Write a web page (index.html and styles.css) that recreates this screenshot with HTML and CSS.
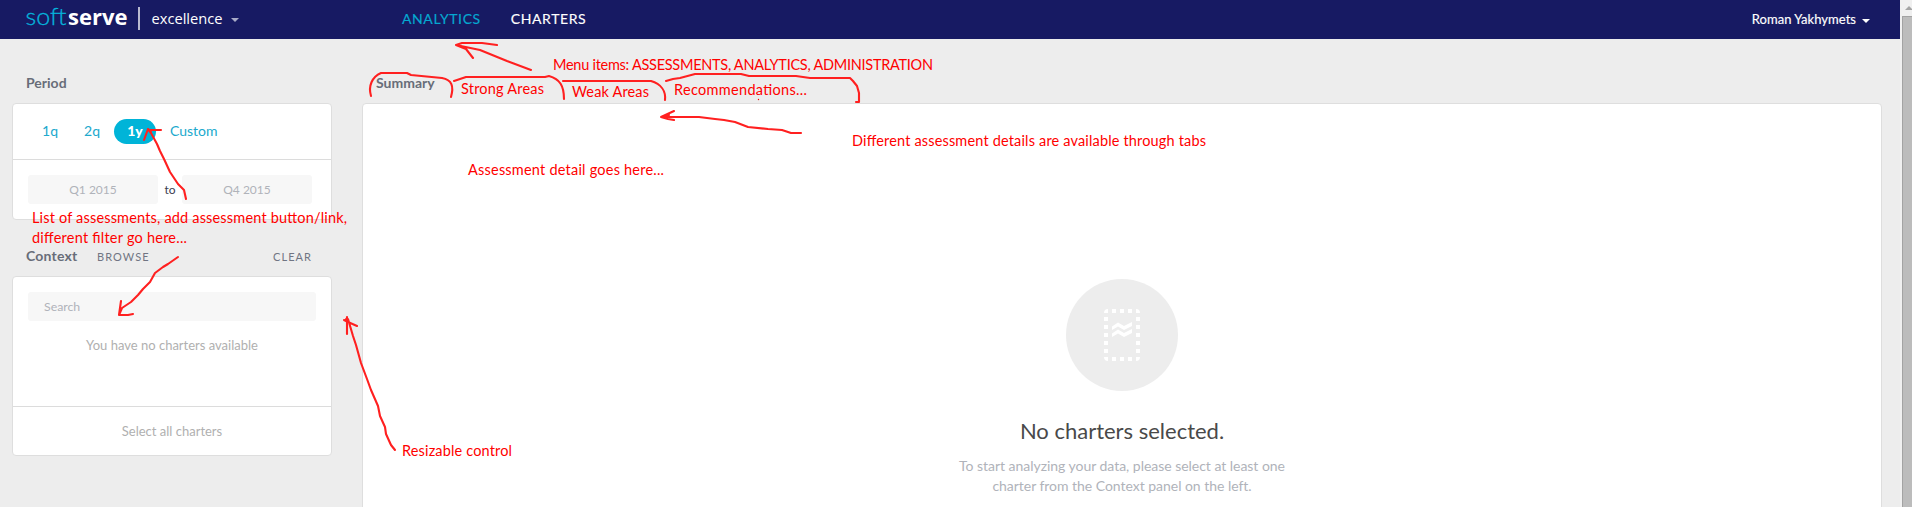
FILE: index.html
```html
<!DOCTYPE html>
<html lang="en">
<head>
<meta charset="utf-8">
<title>SoftServe Excellence – Analytics</title>
<link rel="stylesheet" href="styles.css">
</head>
<body>
<div class="page">
  <div class="app">
    <header class="topbar">
      <div class="brand">
        <svg class="logo" width="205" height="39" viewBox="26 0 205 39">
          <text class="logo-soft" x="25.5" y="25" textLength="41" lengthAdjust="spacingAndGlyphs">soft</text>
          <text class="logo-serve" x="68" y="25" textLength="59.5" lengthAdjust="spacingAndGlyphs">serve</text>
          <rect class="logo-rule" x="138" y="7" width="2" height="23"/>
          <text class="logo-product" x="151.5" y="24" textLength="71" lengthAdjust="spacingAndGlyphs">excellence</text>
        </svg>
        <span class="caret caret-brand"></span>
      </div>
      <nav class="menu">
        <a class="menu-item active">ANALYTICS</a>
        <a class="menu-item">CHARTERS</a>
      </nav>
      <div class="user">Roman Yakhymets<span class="caret caret-user"></span></div>
    </header>
    <div class="body">
      <aside class="sidebar">
        <h2 class="title">Period</h2>
        <section class="card">
          <div class="chips">
            <a class="chip">1q</a><a class="chip">2q</a><a class="chip selected">1y</a><a class="chip custom">Custom</a>
          </div>
          <div class="range">
            <span class="field">Q1 2015</span><span class="to">to</span><span class="field">Q4 2015</span>
          </div>
        </section>
        <div class="context-head">
          <h2 class="title context-title">Context</h2>
          <a class="link">BROWSE</a>
          <a class="link clear">CLEAR</a>
        </div>
        <section class="card">
          <div class="context-body">
            <div class="search">Search</div>
            <p class="none">You have no charters available</p>
          </div>
          <div class="select-all">Select all charters</div>
        </section>
      </aside>
      <main class="main">
        <h2 class="title">Summary</h2>
        <section class="card detail">
          <div class="disc">
            <svg width="36" height="52" viewBox="0 0 36 52" fill="#fff">
              <path d="M4 0V4H0Q0 0 4 0zM32 0V4H36Q36 0 32 0zM0 48H4V52Q0 52 0 48zM32 48H36Q36 52 32 52z"/>
              <path d="M8 0h4v4H8zM16 0h4v4h-4zM24 0h4v4h-4zM8 48h4v4H8zM16 48h4v4h-4zM24 48h4v4h-4z"/>
              <path d="M0 8h4v4H0zM0 16h4v4H0zM0 24h4v4H0zM0 32h4v4H0zM0 40h4v4H0zM32 8h4v4h-4zM32 16h4v4h-4zM32 24h4v4h-4zM32 32h4v4h-4zM32 40h4v4h-4z"/>
              <path d="M8 17.500L14 13.500L20 17L28 13V17L20 21L14 17.500L8 21zM8 24.500L14 20.500L20 24L28 20V24L20 28L14 24.500L8 28z"/>
            </svg>
          </div>
          <h1 class="headline">No charters selected.</h1>
          <p class="hint">To start analyzing your data, please select at least one<br>charter from the Context panel on the left.</p>
        </section>
      </main>
    </div>
  </div>
  <div class="scrollbar"><div class="scroll-up"></div><div class="thumb"></div></div>
</div>
<svg class="notes" width="1912" height="507" viewBox="0 0 1912 507">
  <g class="strokes">
    <path d="M531 70L507 61L480 50L456 45M456 45L466 49L473 58M456 45L462 43H482L497 45"/>
    <path d="M371 96C368 86 372 77 381 73H407L411 75L442 78C452 80 454 86 451 97"/>
    <path d="M454 81L466 77H545L549 76C560 79 564 86 564 99"/>
    <path d="M563 81H651C661 84 666 91 665 100"/>
    <path d="M666 81L673 79L680 78L695 74H741L749 76H796L810 78H850L853 81L857 86L859 93V102H856"/>
    <path d="M801 133H791L782 130L768 129L748 127L735 122L724 120L715 119L699 117H661L674 111M661 117L668 119L674 120M663 117L669 115"/>
    <path d="M186 199L184 190L178 184L170 172L164 159L160 151L157 144L151 133L148 129L144 140M148 129L151 132M149 130H161"/>
    <path d="M178 257L168 264L163 267L155 273L150 282L143 289L138 295L131 302L122 308L119 315L121 301M119 315H128L133 314"/>
    <path d="M395 450L391 445L386 434L385 427L380 416L378 406L371 390L367 379L361 363L356 345L353 336L348 319L346 319M344 320L348 322L357 326M347 317V334"/>
  </g>
  <circle cx="758.500" cy="99.500" r="0.700" fill="#f00"/>
  <g class="labels">
    <text x="553" y="70" textLength="380">Menu items: ASSESSMENTS, ANALYTICS, ADMINISTRATION</text>
    <text x="461" y="94" textLength="83">Strong Areas</text>
    <text x="572" y="97" textLength="77">Weak Areas</text>
    <text x="674" y="95" textLength="133">Recommendations...</text>
    <text x="852" y="146" textLength="354">Different assessment details are available through tabs</text>
    <text x="468" y="175" textLength="196">Assessment detail goes here...</text>
    <text x="32" y="223" textLength="315">List of assessments, add assessment button/link,</text>
    <text x="32" y="243" textLength="155">different filter go here...</text>
    <text x="402" y="456" textLength="110">Resizable control</text>
  </g>
</svg>
</body>
</html>
```
FILE: styles.css
```css
* { box-sizing: border-box; }
body { margin: 0; overflow: hidden; background: #ededed; font-family: Lato, "Liberation Sans", sans-serif; font-size: 14px; color: #b0b3ba; }
h1, h2, p { margin: 0; }
.page { display: flex; height: 507px; overflow: hidden; }
.app { width: 1900px; display: flex; flex-direction: column; }
.topbar { height: 39px; flex: none; display: flex; align-items: center; background: #171a63; color: #fff; padding: 0 30px 0 26px; }
.brand { width: 376px; display: flex; align-items: center; }
.logo-soft { font-family: Lato, sans-serif; font-weight: 300; font-size: 23.5px; fill: #05b4dc; stroke: #05b4dc; stroke-width: 0.3px; }
.logo-serve { font-family: "Open Sans", sans-serif; font-weight: 700; font-size: 21px; fill: #fff; }
.logo-rule { fill: #b9bad0; }
.logo-product { font-family: "Open Sans", sans-serif; font-size: 14px; font-weight: 500; fill: #fff; }
.caret { border: 4px solid transparent; border-top-color: currentColor; border-bottom: 0; }
.caret-brand { color: #a9abc8; }
.caret-user { margin-top: 3px; }
.menu { display: flex; gap: 30px; padding-bottom: 2px; font-size: 14px; letter-spacing: 0.6px; -webkit-text-stroke: 0.15px; }
.active { color: #05a8d1; }
.user { margin-left: auto; padding-bottom: 1px; display: flex; align-items: center; gap: 6px; font-size: 13px; letter-spacing: 0.04px; -webkit-text-stroke: 0.15px; }
.body { display: flex; flex: 1; padding-left: 12px; }
.sidebar { width: 320px; }
.main { width: 1520px; margin-left: 30px; display: flex; flex-direction: column; }
.title { height: 64px; padding: 35px 0 0 14px; font-size: 14px; line-height: 18px; font-weight: 700; color: #686d79; }
.card { background: #fff; border: 1px solid #dedede; border-radius: 4px; }
.chips { height: 56px; border-bottom: 1px solid #dcdcdc; display: flex; align-items: center; color: #20a9cd; }
.chip { width: 42px; height: 25px; line-height: 24px; text-align: center; }
.chip:first-child { margin-left: 16px; }
.selected { background: #00b4d8; color: #fff; font-weight: 900; border-radius: 13px; margin-left: 1px; }
.custom { width: auto; margin-left: 14px; }
.range { height: 59px; display: flex; align-items: flex-start; padding: 15px 15px 0; font-size: 12px; }
.field { width: 130px; height: 29px; line-height: 29px; background: #f7f7f7; border-radius: 3px; text-align: center; }
.to { width: 24px; line-height: 29px; text-align: center; color: #3c4050; }
.context-head { display: flex; height: 56px; align-items: flex-start; padding: 27px 20px 0 14px; }
.context-title { height: auto; padding: 0; width: 71px; letter-spacing: 0.2px; }
.link { font-size: 11px; line-height: 19px; letter-spacing: 1.05px; color: #707583; }
.clear { margin-left: auto; }
.context-body { height: 130px; padding: 15px 15px 0; border-bottom: 1px solid #dcdcdc; }
.search { height: 29px; line-height: 29px; padding-left: 16px; background: #f7f7f7; border-radius: 3px; font-size: 12.3px; }
.none { margin-top: 14px; font-size: 13px; line-height: 20px; text-align: center; color: #b0b0b0; }
.select-all { height: 48px; line-height: 48px; font-size: 13px; text-align: center; color: #b0b0b0; }
.detail { height: 440px; flex: none; display: flex; flex-direction: column; align-items: center; padding-top: 175px; }
.disc { width: 112px; height: 112px; border-radius: 50%; background: #ededed; display: flex; align-items: center; justify-content: center; }
.headline { margin-top: 25px; font-size: 22px; line-height: 30px; font-weight: 400; color: #494949; }
.hint { margin-top: 10px; text-align: center; line-height: 20px; letter-spacing: -0.03px; }
.scrollbar { width: 12px; padding-left: 2px; background: #f0f0f0; }
.scroll-up { width: 8px; height: 10px; margin: 0 0 6px 3px; border: solid transparent; border-width: 6px 4px 4px; border-bottom-color: #a4a4a4; }
.thumb { height: 491px; background: #bcbcbc; border-left: 1px solid #a3a3a3; border-top: 1px solid #a3a3a3; }
.notes { position: absolute; left: 0; top: 0; }
.strokes { fill: none; stroke: #ff2020; stroke-width: 2.1; stroke-linejoin: round; stroke-linecap: round; }
.labels { font-family: Lato, sans-serif; font-size: 14.5px; fill: #f00; }
```
